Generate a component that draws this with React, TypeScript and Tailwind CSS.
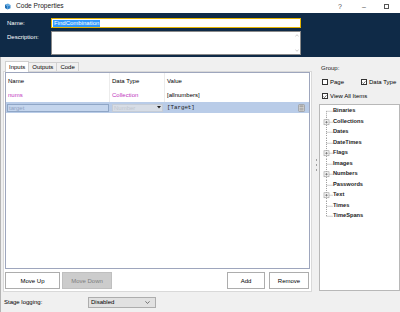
import React from "react";

const TREE = [
  { label: "Binaries", expand: false },
  { label: "Collections", expand: true },
  { label: "Dates", expand: false },
  { label: "DateTimes", expand: false },
  { label: "Flags", expand: true },
  { label: "Images", expand: false },
  { label: "Numbers", expand: true },
  { label: "Passwords", expand: false },
  { label: "Text", expand: true },
  { label: "Times", expand: false },
  { label: "TimeSpans", expand: false },
];

function Check({ checked, label }: { checked: boolean; label: string }) {
  return (
    <div className="flex items-center gap-[2px]">
      <div className="w-[6px] h-[6px] border border-[#333] bg-white flex items-center justify-center">
        {checked && (
          <svg width="5" height="5" viewBox="0 0 5 5">
            <path d="M0.6 2.6 L1.9 3.8 L4.4 1" stroke="#222" strokeWidth="0.8" fill="none" />
          </svg>
        )}
      </div>
      <span>{label}</span>
    </div>
  );
}

function TreeRow({ label, expand, first, last }: { label: string; expand: boolean; first: boolean; last: boolean }) {
  return (
    <div className="flex items-center h-[10.5px]">
      <svg width="13" height="10.5" viewBox="0 0 13 10.5" className="shrink-0">
        <line
          x1="6.5"
          y1={first ? 5.25 : 0}
          x2="6.5"
          y2={last ? 5.25 : 10.5}
          stroke="#a0a0a0"
          strokeWidth="1"
          strokeDasharray="1 1"
        />
        <line x1="6.5" y1="5.25" x2="13" y2="5.25" stroke="#a0a0a0" strokeWidth="1" strokeDasharray="1 1" />
        {expand && (
          <g>
            <rect x="4" y="2.75" width="5" height="5" fill="#f4f4f4" stroke="#9a9a9a" strokeWidth="0.6" />
            <line x1="5.2" y1="5.25" x2="7.8" y2="5.25" stroke="#555" strokeWidth="0.6" />
            <line x1="6.5" y1="4" x2="6.5" y2="6.5" stroke="#555" strokeWidth="0.6" />
          </g>
        )}
      </svg>
      <span className="font-bold text-[5.7px] text-[#222]">{label}</span>
    </div>
  );
}

export default function App() {
  return (
    <div className="w-[400px] h-[312px] overflow-hidden bg-[#f0f0f0] flex flex-col font-['Liberation_Sans',Arial,sans-serif] text-[6px] text-black leading-none">
      {/* title bar */}
      <div className="h-[13px] bg-white flex items-center pl-[4px] shrink-0">
        <svg width="7" height="7" viewBox="0 0 7 7">
          <path d="M1 1.5 L4 0.5 L6.5 2 L3.5 3.2 Z" fill="#5fa8e0" />
          <path d="M1 1.5 L3.5 3.2 L3.5 6.5 L1 5 Z" fill="#1f6fb5" />
          <path d="M3.5 3.2 L6.5 2 L6.5 5.2 L3.5 6.5 Z" fill="#2f86cf" />
        </svg>
        <span className="pl-[5px] text-[6.6px] text-[#222]">Code Properties</span>
        <div className="ml-auto flex items-center text-[#555] text-[7px]">
          <span className="w-[24px] text-center">?</span>
          <span className="w-[24px] text-center">–</span>
          <span className="w-[24px] flex justify-center pr-[4px]">
            <span className="w-[5px] h-[5px] border border-[#555]" />
          </span>
        </div>
      </div>

      {/* name / description */}
      <div className="h-[44px] bg-[#0f2a47] pt-[5px] pl-[7px] flex flex-col gap-[3px] shrink-0">
        <div className="flex items-center">
          <span className="w-[44px] text-white">Name:</span>
          <div className="w-[250px] h-[10px] bg-white border border-[#e3b200] flex items-center px-[1px]">
            <span className="bg-[#3399ff] text-white px-[1px] h-[7px] flex items-center">FindCombination</span>
          </div>
        </div>
        <div className="flex items-start">
          <span className="w-[44px] text-white pt-[3px]">Description:</span>
          <div className="w-[250px] h-[24px] bg-white border border-[#8a8a8a] flex justify-end">
            <div className="w-[7px] h-full flex flex-col justify-between items-center py-[2px] text-[#bdbdbd]">
              <svg width="4" height="3" viewBox="0 0 4 3">
                <path d="M0.3 2.5 L2 0.7 L3.7 2.5" stroke="#b8b8b8" strokeWidth="0.7" fill="none" />
              </svg>
              <svg width="4" height="3" viewBox="0 0 4 3">
                <path d="M0.3 0.5 L2 2.3 L3.7 0.5" stroke="#b8b8b8" strokeWidth="0.7" fill="none" />
              </svg>
            </div>
          </div>
        </div>
      </div>

      {/* body */}
      <div className="flex-1 flex border-l border-[#b4b4b4]">
        <div className="w-[312px] pl-[2px] flex flex-col shrink-0">
          {/* tabs */}
          <div className="h-[14px] flex items-end pl-[2px]">
            <div className="h-[11px] px-[3px] bg-white border border-b-0 border-[#d0d0d0] flex items-center -mb-[1px] z-10">
              Inputs
            </div>
            <div className="h-[9px] px-[3px] bg-[#f0f0f0] border border-b-0 border-l-0 border-[#d0d0d0] flex items-center">
              Outputs
            </div>
            <div className="h-[9px] px-[3px] bg-[#f0f0f0] border border-b-0 border-l-0 border-[#d0d0d0] flex items-center">
              Code
            </div>
          </div>

          {/* panel */}
          <div className="w-[309px] h-[221px] border border-[#d9d9d9] bg-white px-[1px] flex flex-col">
            <div className="h-[197px] border border-[#9ea6bd] bg-white flex flex-col">
              <div className="h-[15px] flex items-center">
                <div className="w-[104px] h-full pl-[2px] flex items-center border-r border-[#ececec]">Name</div>
                <div className="w-[55px] h-full pl-[2px] flex items-center border-r border-[#ececec]">Data Type</div>
                <div className="pl-[2px]">Value</div>
              </div>
              <div className="h-[14px] flex items-center">
                <div className="w-[104px] h-full pl-[2px] flex items-center border-r border-[#ececec] text-[#c035c0]">nums</div>
                <div className="w-[55px] h-full pl-[2px] flex items-center border-r border-[#ececec] text-[#c035c0]">Collection</div>
                <div className="pl-[2px]">[allnumbers]</div>
              </div>
              <div className="h-[11px] flex items-center bg-[#b9cce8]">
                <div className="w-[104px] h-full flex items-center pl-[1px] pr-[1px]">
                  <div className="w-full h-[8px] border border-[#8fa6c6] bg-[#c4d5ed] flex items-center pl-[1px] text-[#90a3c2]">
                    target
                  </div>
                </div>
                <div className="w-[55px] h-full flex items-center pl-[2px] pr-[2px]">
                  <div className="w-full h-[8px] bg-[#d7dde6] border border-[#c5ccd6] flex items-center pl-[1px] text-[#bfc6d0]">
                    <span>Number</span>
                    <svg width="4" height="3" viewBox="0 0 4 3" className="ml-auto mr-[1px]">
                      <path d="M0 0 L4 0 L2 2.6 Z" fill="#222" />
                    </svg>
                  </div>
                </div>
                <div className="flex-1 flex items-center pl-[2px] font-['Liberation_Mono',monospace] text-[5.8px] text-[#1a1a1a]">
                  <span>[Target]</span>
                  <svg width="7" height="8" viewBox="0 0 7 8" className="ml-auto mr-[4px]">
                    <rect x="0.5" y="0.5" width="6" height="7" rx="1" fill="#d8d8d8" stroke="#8a8a8a" strokeWidth="0.6" />
                    <rect x="1.5" y="1.4" width="4" height="1.4" fill="#9a9a9a" />
                    <rect x="1.5" y="3.6" width="4" height="3" fill="#b0b0b0" />
                  </svg>
                </div>
              </div>
            </div>
            <div className="flex items-center mt-[3px]">
              <div className="w-[55px] h-[17px] bg-white border border-[#adadad] flex items-center justify-center">
                Move Up
              </div>
              <div className="w-[50px] h-[17px] ml-[2px] bg-[#cccccc] border border-[#bfbfbf] flex items-center justify-center text-[#7d7d7d]">
                Move Down
              </div>
              <div className="w-[38px] h-[17px] ml-auto bg-white border border-[#adadad] flex items-center justify-center">
                Add
              </div>
              <div className="w-[40px] h-[17px] ml-[4px] mr-[1px] bg-white border border-[#adadad] flex items-center justify-center">
                Remove
              </div>
            </div>
          </div>

          {/* stage logging */}
          <div className="flex-1 flex items-center pl-[1px]">
            <span className="w-[84px]">Stage logging:</span>
            <div className="w-[68px] h-[11px] bg-[#e1e1e1] border border-[#adadad] flex items-center pl-[2px]">
              <span>Disabled</span>
              <svg width="5" height="3" viewBox="0 0 5 3" className="ml-auto mr-[5px]">
                <path d="M0.4 0.4 L2.5 2.4 L4.6 0.4" stroke="#444" strokeWidth="0.7" fill="none" />
              </svg>
            </div>
          </div>
        </div>

        {/* splitter */}
        <div className="w-[6px] flex flex-col items-center justify-center gap-[3px] pb-[40px] shrink-0">
          <span className="w-[1px] h-[2px] bg-[#a0a0a0]" />
          <span className="w-[1px] h-[2px] bg-[#a0a0a0]" />
          <span className="w-[1px] h-[2px] bg-[#a0a0a0]" />
        </div>

        {/* group panel */}
        <div className="flex-1 flex flex-col pt-[8px]">
          <span className="pl-[2px] text-[#222]">Group:</span>
          <div className="flex items-center pl-[3px] mt-[8px]">
            <div className="w-[39px]">
              <Check checked={false} label="Page" />
            </div>
            <Check checked={true} label="Data Type" />
          </div>
          <div className="pl-[3px] mt-[8px]">
            <Check checked={true} label="View All Items" />
          </div>
          <div className="mt-[5px] h-[187px] border border-[#b8b8b8] bg-white pt-[1px]">
            {TREE.map((t, i) => (
              <TreeRow key={t.label} label={t.label} expand={t.expand} first={i === 0} last={i === TREE.length - 1} />
            ))}
          </div>
        </div>
      </div>
    </div>
  );
}
